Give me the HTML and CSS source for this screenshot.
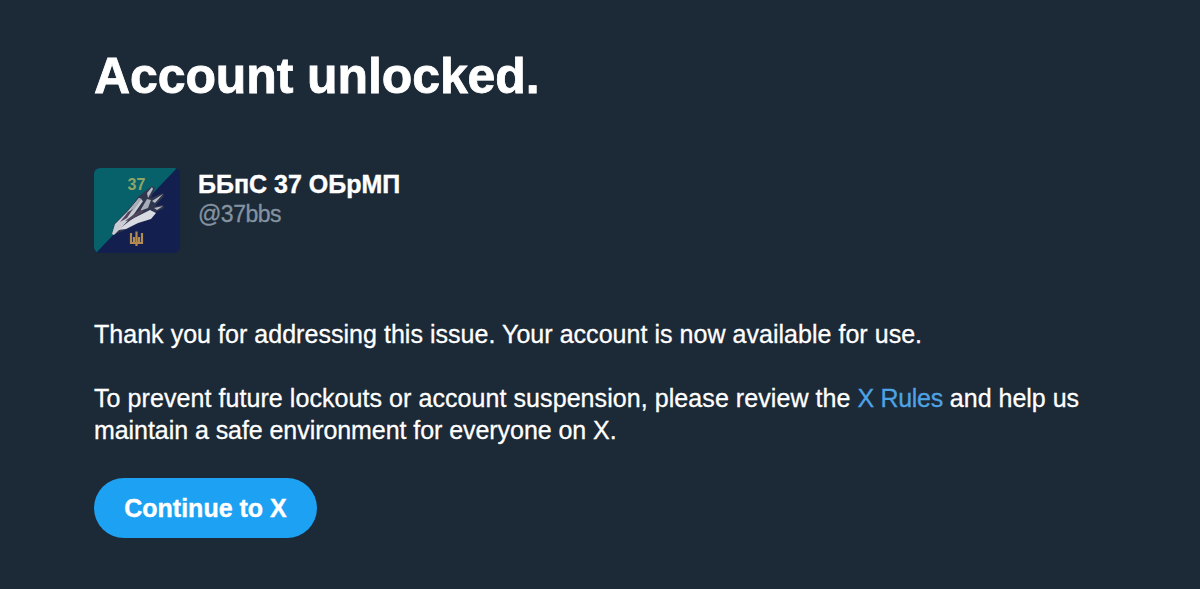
FILE: index.html
```html
<!DOCTYPE html>
<html lang="en">
  <head>
    <meta charset="UTF-8" />
    <meta name="viewport" content="width=device-width, initial-scale=1.0" />
    <title>Account unlocked</title>
    <link rel="stylesheet" href="styles.css">
  </head>
  <body>
    <main class="page">
      <h1 class="title">Account unlocked.</h1>

      <section class="profile">
        <svg class="avatar" viewBox="0 0 86 85">
          <rect width="86" height="85" fill="#131f4e" />
          <path d="M0 0H83L2 85H0z" fill="#07616a" />
          <text class="num" x="42.500" y="21.500" text-anchor="middle">37</text>
          <!-- jet -->
          <path d="M18 65l3-10 13-13 11-14 13-10 3 2-4 10 12-5 1 3-9 10 8-1 1 3-8 4-6 7-14 5-13 7-8 3z" fill="#30364d" />
          <path d="M18 66l3-10 13-13 11-13 4 3-9 13-12 13-8 8z" fill="#c9ccd5" />
          <path d="M24 62l14-11 18-9 6 3-5 6-13 4-12 6z" fill="#d9dbe2" />
          <path d="M36 41l9-11 3 1-9 12zM46 43l7-12 4 1-3 8z" fill="#a6adb8" />
          <path d="M53 25l5-6 1 2-5 9zM58 33l11-7-8 9zM60 40l9-2-6 4z" fill="#b5bac4" />
          <path d="M26 54l8-10 5-3-6 9zM31 53l15-11 4 1-13 9z" fill="#51465c" />
          <!-- trident -->
          <path d="M37 65v10h11V65M42.500 63.500V78M40 69v6M45 69v6" fill="none" stroke="#b18b52" stroke-width="2.200" />
        </svg>
        <div class="names">
          <strong class="name">ББпС 37 ОБрМП</strong>
          <span class="handle">@37bbs</span>
        </div>
      </section>

      <p class="text intro">Thank you for addressing this issue. Your account is now available for use.</p>
      <p class="text"><span class="wide">To prevent future lockouts or account suspension, please review the</span> <a class="link" href="#">X Rules</a> and help us<br><span class="tight">maintain a safe environment for everyone on X.</span></p>
      <button class="btn">Continue to X</button>
    </main>
  </body>
</html>
```

FILE: styles.css
```css
body {
  margin: 0;
  background: #1c2936;
  color: #fff;
  font-family: "Liberation Sans", Arial, sans-serif;
}
.page {
  padding: 46px 94px 0;
}
.title {
  margin: 0;
  font-size: 50px;
  line-height: 60px;
  letter-spacing: -0.1px;
  -webkit-text-stroke: 0.8px #fff;
}
.profile {
  display: flex;
  gap: 18px;
  margin: 62px 0 65px;
}
.avatar {
  width: 86px;
  height: 85px;
  border-radius: 6px;
}
.num {
  fill: #8fa565;
  font-size: 16px;
  font-weight: bold;
}
.names {
  display: flex;
  flex-direction: column;
}
.name {
  font-size: 25px;
  line-height: 32px;
  -webkit-text-stroke: 0.4px #fff;
}
.handle {
  color: #8493a1;
  font-size: 23px;
  line-height: 29px;
  letter-spacing: -0.5px;
  -webkit-text-stroke: 0.3px #8493a1;
}
.text {
  margin: 0 0 32px;
  font-size: 25px;
  line-height: 32px;
  white-space: nowrap;
  -webkit-text-stroke: 0.3px;
}
.intro {
  letter-spacing: 0.035px;
}
.wide {
  letter-spacing: 0.07px;
}
.tight {
  letter-spacing: -0.06px;
}
.link {
  color: #4ea3e4;
  letter-spacing: -0.3px;
  text-decoration: none;
}
.btn {
  display: block;
  width: 223px;
  height: 60px;
  border: 0;
  border-radius: 30px;
  background: #1da1f2;
  color: #fff;
  font: bold 25px "Liberation Sans", Arial, sans-serif;
  -webkit-text-stroke: 0.4px #fff;
}
```
